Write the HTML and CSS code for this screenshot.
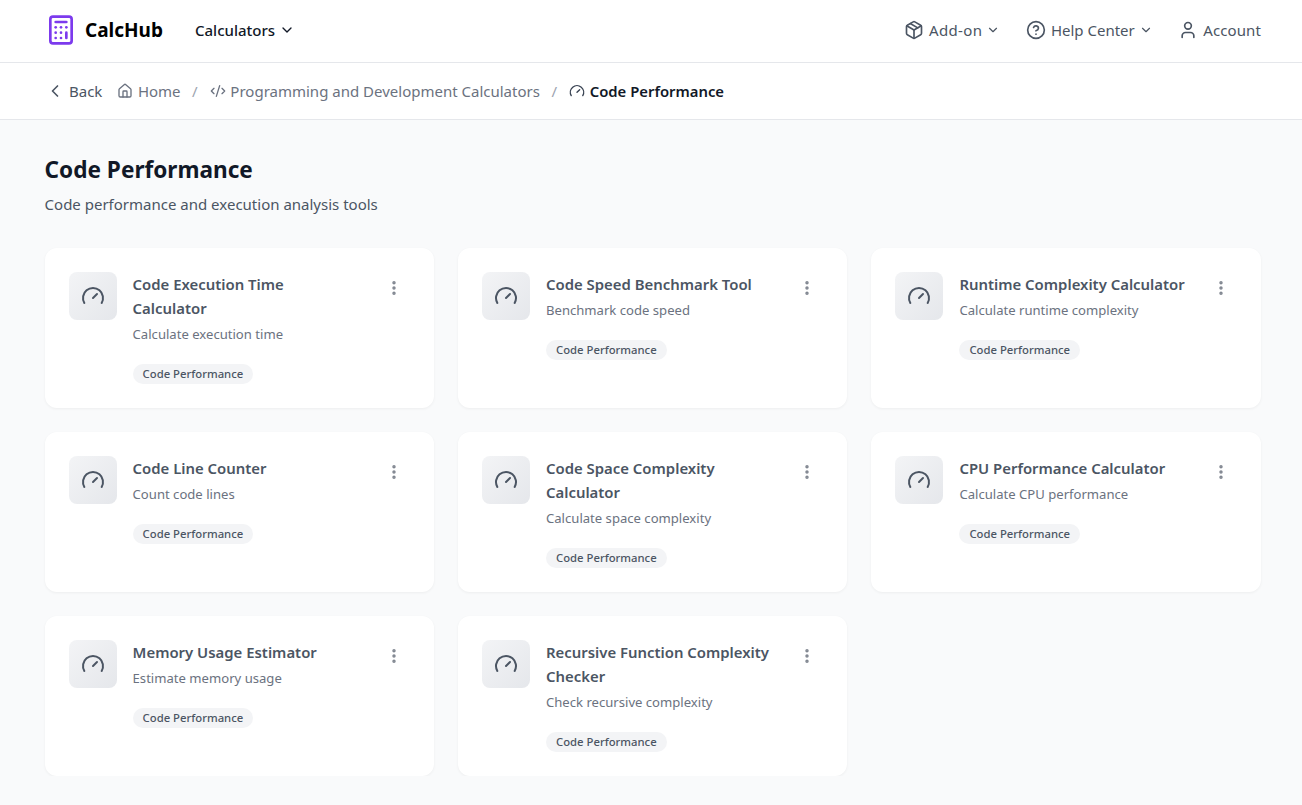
FILE: index.html
```html
<!DOCTYPE html>
<html>
<head>
  <title>Code Performance - CalcHub</title>
  <link rel="stylesheet" href="styles.css">
</head>
<body>
<svg class="sprite" width="0" height="0">
  <symbol id="gauge" viewBox="0 0 24 24"><path d="M3.34 19a10 10 0 1 1 17.32 0"/><path d="m12 14 4-4"/></symbol>
  <symbol id="chevron" viewBox="0 0 24 24"><path d="m6 9 6 6 6-6"/></symbol>
  <symbol id="dots" viewBox="0 0 24 24"><circle cx="12" cy="5" r="1.3"/><circle cx="12" cy="12" r="1.3"/><circle cx="12" cy="19" r="1.3"/></symbol>
</svg>

<header class="topbar">
  <a class="logo">
    <svg class="logo-icon" viewBox="0 0 24 24"><rect x="4" y="2" width="16" height="20" rx="2"/><line x1="8" x2="16" y1="6" y2="6"/><line x1="16" x2="16" y1="14" y2="18"/><path d="M16 10h.01"/><path d="M12 10h.01"/><path d="M8 10h.01"/><path d="M12 14h.01"/><path d="M8 14h.01"/><path d="M12 18h.01"/><path d="M8 18h.01"/></svg>
    <span>CalcHub</span>
  </a>
  <a class="calc-menu">Calculators <svg class="icon chev-dark"><use href="#chevron"/></svg></a>
  <nav class="topnav">
    <a class="addon"><svg class="icon nav-icon" viewBox="0 0 24 24"><path d="M21 8a2 2 0 0 0-1-1.73l-7-4a2 2 0 0 0-2 0l-7 4A2 2 0 0 0 3 8v8a2 2 0 0 0 1 1.73l7 4a2 2 0 0 0 2 0l7-4A2 2 0 0 0 21 16Z"/><path d="m3.3 7 8.7 5 8.7-5"/><path d="M12 22V12"/><path d="m7.5 4.27 9 5.15"/></svg>Add-on<svg class="icon chev"><use href="#chevron"/></svg></a>
    <a><svg class="icon nav-icon" viewBox="0 0 24 24"><circle cx="12" cy="12" r="10"/><path d="M9.09 9a3 3 0 0 1 5.83 1c0 2-3 3-3 3"/><path d="M12 17h.01"/></svg>Help Center<svg class="icon chev"><use href="#chevron"/></svg></a>
    <a class="account"><svg class="icon nav-icon" viewBox="0 0 24 24"><path d="M19 21v-2a4 4 0 0 0-4-4H9a4 4 0 0 0-4 4v2"/><circle cx="12" cy="7" r="4"/></svg>Account</a>
  </nav>
</header>

<div class="crumbs">
  <a class="back"><svg class="icon back-icon" viewBox="0 0 24 24"><path d="m15 18-6-6 6-6"/></svg>Back</a>
  <a class="crumb"><svg class="icon crumb-icon" viewBox="0 0 24 24"><path d="M15 21v-8a1 1 0 0 0-1-1h-4a1 1 0 0 0-1 1v8"/><path d="M3 10a2 2 0 0 1 .71-1.53l7-6a2 2 0 0 1 2.58 0l7 6A2 2 0 0 1 21 10v9a2 2 0 0 1-2 2H5a2 2 0 0 1-2-2z"/></svg>Home</a>
  <span class="sep">/</span>
  <a class="crumb"><svg class="icon crumb-icon" viewBox="0 0 24 24"><path d="m18 16 4-4-4-4"/><path d="m6 8-4 4 4 4"/><path d="m14.5 4-5 16"/></svg>Programming and Development Calculators</a>
  <span class="sep">/</span>
  <span class="crumb current"><svg class="icon crumb-icon"><use href="#gauge"/></svg>Code Performance</span>
</div>

<main class="content">
  <h1>Code Performance</h1>
  <p class="lead">Code performance and execution analysis tools</p>

  <div class="grid">
    <article class="card">
      <div class="card-icon"><svg class="icon"><use href="#gauge"/></svg></div>
      <div class="card-body">
        <h2>Code Execution Time Calculator</h2>
        <p>Calculate execution time</p>
        <span class="tag">Code Performance</span>
      </div>
      <svg class="icon kebab"><use href="#dots"/></svg>
    </article>
    <article class="card">
      <div class="card-icon"><svg class="icon"><use href="#gauge"/></svg></div>
      <div class="card-body">
        <h2>Code Speed Benchmark Tool</h2>
        <p>Benchmark code speed</p>
        <span class="tag">Code Performance</span>
      </div>
      <svg class="icon kebab"><use href="#dots"/></svg>
    </article>
    <article class="card">
      <div class="card-icon"><svg class="icon"><use href="#gauge"/></svg></div>
      <div class="card-body">
        <h2>Runtime Complexity Calculator</h2>
        <p>Calculate runtime complexity</p>
        <span class="tag">Code Performance</span>
      </div>
      <svg class="icon kebab"><use href="#dots"/></svg>
    </article>
    <article class="card">
      <div class="card-icon"><svg class="icon"><use href="#gauge"/></svg></div>
      <div class="card-body">
        <h2>Code Line Counter</h2>
        <p>Count code lines</p>
        <span class="tag">Code Performance</span>
      </div>
      <svg class="icon kebab"><use href="#dots"/></svg>
    </article>
    <article class="card">
      <div class="card-icon"><svg class="icon"><use href="#gauge"/></svg></div>
      <div class="card-body">
        <h2>Code Space Complexity Calculator</h2>
        <p>Calculate space complexity</p>
        <span class="tag">Code Performance</span>
      </div>
      <svg class="icon kebab"><use href="#dots"/></svg>
    </article>
    <article class="card">
      <div class="card-icon"><svg class="icon"><use href="#gauge"/></svg></div>
      <div class="card-body">
        <h2>CPU Performance Calculator</h2>
        <p>Calculate CPU performance</p>
        <span class="tag">Code Performance</span>
      </div>
      <svg class="icon kebab"><use href="#dots"/></svg>
    </article>
    <article class="card">
      <div class="card-icon"><svg class="icon"><use href="#gauge"/></svg></div>
      <div class="card-body">
        <h2>Memory Usage Estimator</h2>
        <p>Estimate memory usage</p>
        <span class="tag">Code Performance</span>
      </div>
      <svg class="icon kebab"><use href="#dots"/></svg>
    </article>
    <article class="card">
      <div class="card-icon"><svg class="icon"><use href="#gauge"/></svg></div>
      <div class="card-body">
        <h2>Recursive Function Complexity Checker</h2>
        <p>Check recursive complexity</p>
        <span class="tag">Code Performance</span>
      </div>
      <svg class="icon kebab"><use href="#dots"/></svg>
    </article>
  </div>
</main>
</body>
</html>
```

FILE: styles.css
```css
* {
  box-sizing: border-box;
}

body {
  margin: 0;
  background-color: #f9fafb;
  color: #111827;
  font-family: "Noto Sans", Arial, sans-serif;
  font-size: 16px;
}

.sprite {
  display: block;
  height: 0;
}

.icon {
  fill: none;
  stroke: currentColor;
  stroke-width: 2;
  stroke-linecap: round;
  stroke-linejoin: round;
  flex-shrink: 0;
}

/* top bar */
.topbar {
  display: flex;
  align-items: center;
  height: 63px;
  padding: 0 41px 2px 45px;
  background-color: #fff;
  border-bottom: 1px solid #e5e7eb;
}

.logo {
  display: flex;
  align-items: center;
  gap: 8px;
  width: 150px;
  font-size: 19px;
  font-weight: 700;
  color: #000;
}

.logo-icon {
  width: 32px;
  height: 32px;
  fill: none;
  stroke: #7c3aed;
  stroke-width: 2;
  stroke-linecap: round;
  stroke-linejoin: round;
}

.calc-menu {
  display: flex;
  align-items: center;
  gap: 4px;
  font-size: 15px;
  font-weight: 500;
  color: #111827;
}

.chev-dark {
  width: 16px;
  height: 16px;
}

.topnav {
  display: flex;
  align-items: center;
  gap: 25.5px;
  margin-left: auto;
  color: #4b5563;
  font-size: 15px;
}

.topnav a {
  display: flex;
  align-items: center;
}

.topnav .addon {
  letter-spacing: 0.38px;
}

.topnav .account {
  letter-spacing: 0.1px;
}

.nav-icon {
  width: 20px;
  height: 20px;
  margin-right: 5px;
}

.chev {
  width: 14px;
  height: 14px;
  margin-left: 4px;
}

/* breadcrumb */
.crumbs {
  display: flex;
  align-items: center;
  height: 57px;
  padding: 0 45px;
  background-color: #fff;
  border-bottom: 1px solid #e5e7eb;
  color: #6b7280;
  font-size: 15px;
}

.back,
.crumb {
  display: flex;
  align-items: center;
}

.back {
  margin-right: 15px;
  color: #4b5563;
}

.back-icon {
  width: 20px;
  height: 20px;
  margin-right: 4px;
}

.crumb-icon {
  width: 16px;
  height: 16px;
  margin-right: 4.5px;
  color: #6b7280;
}

.sep {
  margin: 0 12.2px 0 11.5px;
  color: #9ca3af;
}

.current {
  color: #111827;
  font-size: 14.85px;
  font-weight: 600;
}

.current .crumb-icon {
  color: #374151;
}

/* main */
.content {
  padding: 32px 41.2px 0 44.6px;
}

h1 {
  margin: 0;
  font-size: 22.6px;
  line-height: 36px;
  font-weight: 700;
  color: #111827;
}

.lead {
  margin: 5px 0 33px;
  font-size: 15px;
  line-height: 22px;
  color: #4b5563;
}

.grid {
  display: grid;
  grid-template-columns: repeat(3, 1fr);
  gap: 24px;
}

.card {
  display: flex;
  align-items: flex-start;
  height: 160px;
  padding: 24px;
  background-color: #fff;
  border-radius: 12px;
  box-shadow: 0 1px 3px rgba(0, 0, 0, 0.05);
}

.card-icon {
  display: flex;
  align-items: center;
  justify-content: center;
  width: 48px;
  height: 48px;
  margin-right: 16px;
  background: linear-gradient(135deg, #f3f4f6, #e5e7eb);
  border-radius: 8px;
  color: #4b5563;
  flex-shrink: 0;
}

.card-icon .icon {
  width: 24px;
  height: 24px;
}

.card-body {
  flex: 1;
  min-width: 0;
  padding-right: 25px;
}

.card h2 {
  margin: 0;
  font-size: 14.9px;
  line-height: 24px;
  font-weight: 600;
  color: #4b5563;
}

.card p {
  margin: 3px 0 0;
  font-size: 13.1px;
  line-height: 22px;
  color: #6b7280;
}

.tag {
  display: inline-block;
  margin-top: 19px;
  padding: 0 10px;
  font-size: 11.3px;
  line-height: 20px;
  font-weight: 500;
  color: #4b5563;
  background-color: #f3f4f6;
  border-radius: 10px;
}

.kebab {
  width: 18px;
  height: 18px;
  margin: 7px 7px 0 0;
  color: #808690;
}
```
